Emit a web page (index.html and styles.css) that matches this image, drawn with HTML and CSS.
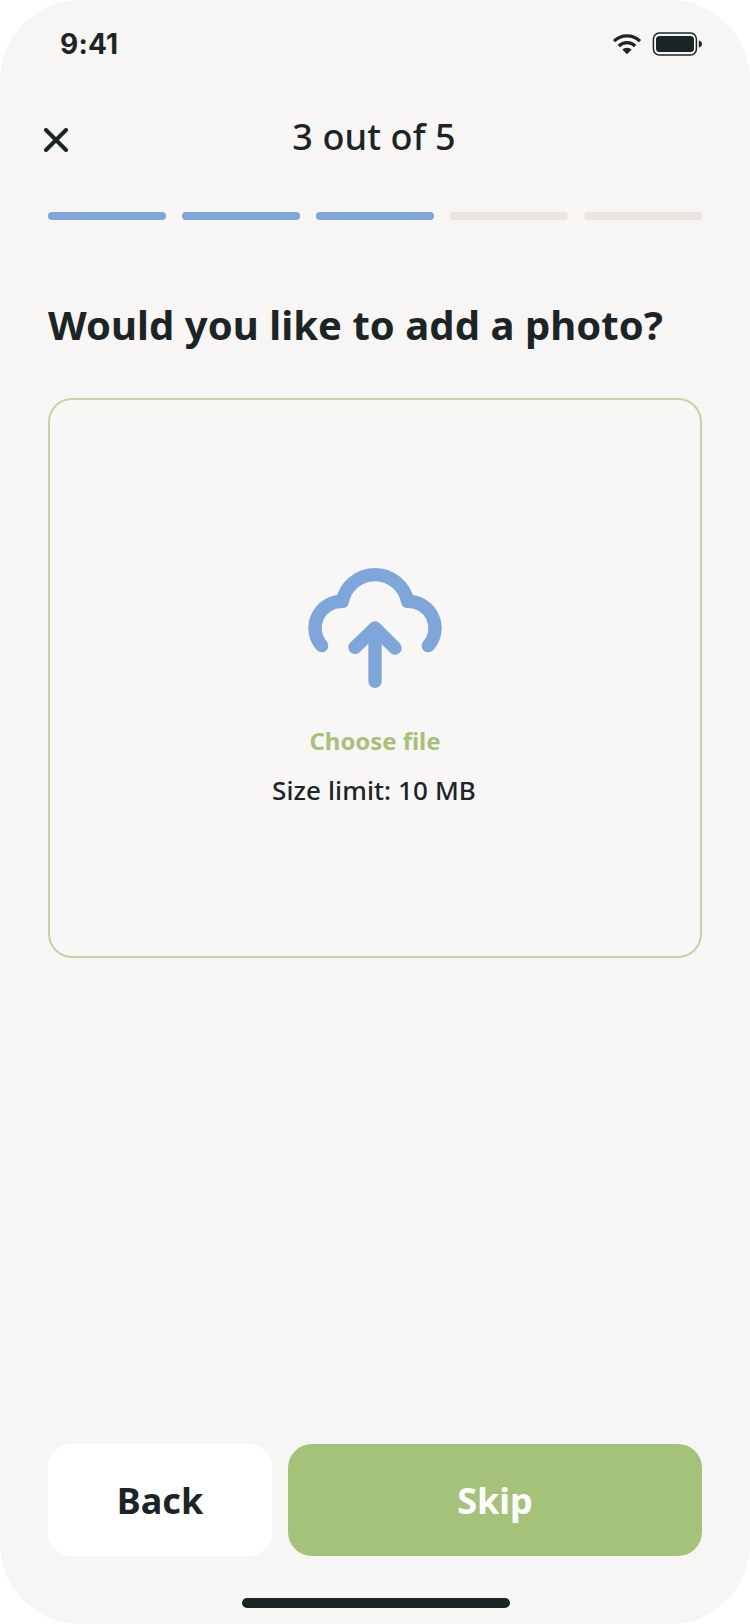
FILE: index.html
```html
<!DOCTYPE html>
<html lang="en">
<head>
<meta charset="utf-8">
<title>Add a photo</title>
<link rel="stylesheet" href="styles.css">
</head>
<body>
<div class="screen">
  <div class="status-bar">
    <span class="time">9:41</span>
    <div class="status-icons">
      <svg class="wifi" viewBox="0 0 28 20" fill="none" stroke="currentColor">
        <path d="M1 7.200A18.400 18.400 0 0 1 27 7.200" stroke-width="3.200"/>
        <path d="M5.800 12A11.600 11.600 0 0 1 22.200 12" stroke-width="3.200"/>
        <path d="M9.300 15.600A6.800 6.800 0 0 1 18.700 15.600L14 20.200Z" fill="currentColor" stroke="none"/>
      </svg>
      <svg class="battery" viewBox="0 0 50 24" fill="none">
        <rect x="1.400" y="1" width="43" height="22" rx="6" stroke="currentColor" stroke-width="1.500"/>
        <rect x="4" y="4" width="38" height="16" rx="3.500" fill="currentColor"/>
        <path d="M46.800 8.500C48.800 9 50 10.300 50 12S48.800 15 46.800 15.500Z" fill="currentColor"/>
      </svg>
    </div>
  </div>
  <header class="header">
    <button class="close" aria-label="Close">
      <svg viewBox="0 0 24 24" fill="none" stroke="currentColor" stroke-width="4" stroke-linecap="round"><path d="M2 2L22 22M22 2L2 22"/></svg>
    </button>
    <span class="step">3 out of 5</span>
  </header>
  <div class="progress">
    <span class="bar done"></span>
    <span class="bar done"></span>
    <span class="bar done"></span>
    <span class="bar"></span>
    <span class="bar"></span>
  </div>
  <main class="content">
    <h1 class="question">Would you like to add a photo?</h1>
    <div class="upload">
      <svg class="cloud" viewBox="0 0 24 24" fill="none" stroke="currentColor" stroke-width="2" stroke-linecap="round" stroke-linejoin="round">
        <path d="M4 14.646A4 4 0 0 1 7.100 8A5 5 0 0 1 16.900 8A4 4 0 0 1 20 14.646"/>
        <path d="M9 14.900L12 12L15 15M12 12V20"/>
      </svg>
      <span class="choose">Choose file</span>
      <span class="limit">Size limit: 10 MB</span>
    </div>
  </main>
  <footer class="actions">
    <button class="btn back">Back</button>
    <button class="btn skip">Skip</button>
  </footer>
  <div class="home-indicator"></div>
</div>
</body>
</html>
```
FILE: styles.css
```css
* { box-sizing: border-box; }

body {
  margin: 0;
  background: #fff;
  color: #1c2526;
  font-family: "Noto Sans", "Open Sans", sans-serif;
}

svg { display: block; }

button {
  border: 0;
  padding: 0;
  background: none;
  color: inherit;
  font: inherit;
}

.screen {
  display: flex;
  flex-direction: column;
  width: 750px;
  height: 1624px;
  padding: 0 48px 16px;
  border-radius: 80px;
  background: #f7f6f4;
}

.status-bar {
  display: flex;
  align-items: center;
  justify-content: space-between;
  height: 88px;
  padding-left: 12px;
}

.time {
  font: 700 28px/34px "Inter", sans-serif;
  letter-spacing: 0.2px;
}

.status-icons {
  display: flex;
  align-items: center;
  gap: 11px;
}

.wifi { width: 28px; height: 20px; overflow: visible; }
.battery { width: 50px; height: 24px; }

.header {
  display: grid;
  grid-template-columns: 24px 1fr 24px;
  align-items: center;
  height: 100px;
  margin: 0 -3px 0 -4px;
}

.close { padding-top: 4px; }
.close svg { width: 24px; height: 24px; }

.step {
  padding: 0 1px 2px 0;
  text-align: center;
  font-size: 36px;
  font-weight: 500;
  line-height: 50px;
  letter-spacing: 0.1px;
}

.progress {
  display: grid;
  grid-template-columns: repeat(5, 1fr);
  gap: 16px;
  margin-top: 24px;
}

.bar {
  height: 8px;
  border-radius: 4px;
  background: #ebe4de;
}

.bar.done { background: #7ea6db; }

.content {
  flex: 1;
  padding-top: 77px;
}

.question {
  margin: 0 0 45px;
  font-size: 40px;
  font-weight: 700;
  line-height: 56px;
  letter-spacing: 0.05px;
  white-space: nowrap;
}

.upload {
  display: flex;
  flex-direction: column;
  align-items: center;
  height: 560px;
  padding-top: 148px;
  border: 2px solid #c0d6a1;
  border-radius: 24px;
  background: #f8f7f5;
}

.cloud {
  width: 160px;
  height: 160px;
  color: #7ea6db;
}

.choose {
  margin-top: 16px;
  font-size: 24px;
  font-weight: 700;
  line-height: 34px;
  letter-spacing: -0.05px;
  color: #a4c27a;
}

.limit {
  margin-top: 14px;
  padding-right: 2px;
  font-size: 26px;
  font-weight: 500;
  line-height: 36px;
  letter-spacing: 0.1px;
}

.actions {
  display: grid;
  grid-template-columns: 224px 1fr;
  gap: 16px;
}

.btn {
  height: 112px;
  border-radius: 24px;
  font-size: 36px;
  font-weight: 700;
}

.back { background: #fff; }
.skip { background: #a4c27a; color: #fff; }

.home-indicator {
  align-self: center;
  width: 268px;
  height: 10px;
  margin: 42px 0 0 2px;
  border-radius: 5px;
  background: #1c2526;
}
```
